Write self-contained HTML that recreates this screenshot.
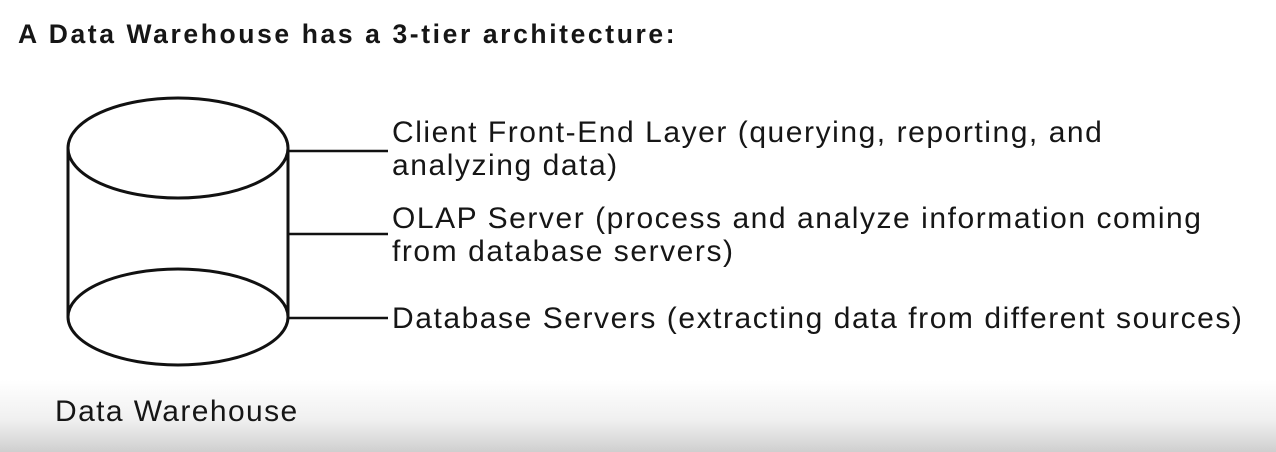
<!DOCTYPE html>
<html><head><style>
html,body{margin:0;padding:0}
body{width:1276px;height:452px;position:relative;overflow:hidden;background:linear-gradient(to bottom,#fff 0,#fff 380px,#f0f0f0 420px,#cfcfcf 452px);font-family:"Liberation Sans",sans-serif;color:#161616}
.t{position:absolute;white-space:nowrap}
.d{font-size:30px;line-height:33px;letter-spacing:1.55px}
</style></head><body>
<div class="t" style="left:18px;top:19px;font-size:26.5px;line-height:30px;font-weight:bold;letter-spacing:2.6px">A Data Warehouse has a 3-tier architecture:</div>
<svg width="1276" height="452" style="position:absolute;left:0;top:0">
<g fill="none" stroke="#111" stroke-width="3">
<path d="M68 148 V317 M288 148 V317"/>
<ellipse cx="178" cy="148" rx="110" ry="50" fill="#fff"/>
<path d="M68 317 A110 48 0 0 1 288 317 A110 48 0 0 1 68 317Z"/>
<path d="M288 151 H388 M288 234 H388 M288 318 H388" stroke-width="2.5"/>
</g>
</svg>
<div class="t d" style="left:392px;top:116px">Client Front-End Layer (querying, reporting, and<br>analyzing data)</div>
<div class="t d" style="left:392px;top:202px">OLAP Server (process and analyze information coming<br>from database servers)</div>
<div class="t d" style="left:392px;top:302px">Database Servers (extracting data from different sources)</div>
<div class="t" style="left:55px;top:395px;font-size:30px;line-height:33px;letter-spacing:1.4px">Data Warehouse</div>
</body></html>
